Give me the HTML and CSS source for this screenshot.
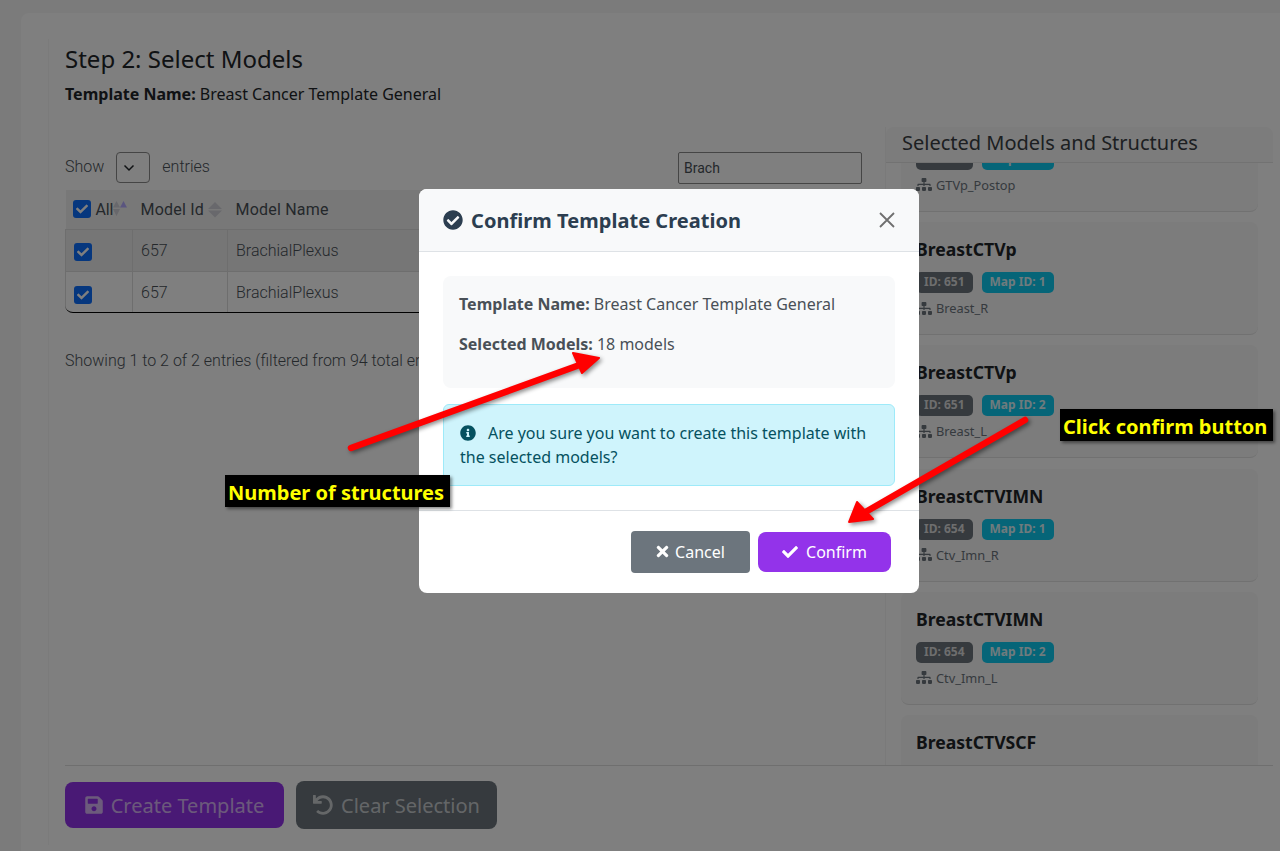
FILE: index.html
```html
<!DOCTYPE html>
<html>
<head>
    <title>Step 2: Select Models</title>
    <link rel="stylesheet" href="styles.css">
</head>
<body>
    <svg class="icon-defs" width="0" height="0">
        <symbol id="i-circle-check" viewBox="0 0 512 512"><path d="M504 256c0 136.967-111.033 248-248 248S8 392.967 8 256 119.033 8 256 8s248 111.033 248 248zM227.314 387.314l184-184c6.248-6.248 6.248-16.379 0-22.627l-22.627-22.627c-6.248-6.249-16.379-6.249-22.628 0L216 308.118l-70.059-70.059c-6.248-6.248-16.379-6.248-22.628 0l-22.627 22.627c-6.248 6.248-6.248 16.379 0 22.627l104 104c6.249 6.249 16.379 6.249 22.628.001z"/></symbol>
        <symbol id="i-circle-info" viewBox="0 0 512 512"><path d="M256 8C119.043 8 8 119.083 8 256c0 136.997 111.043 248 248 248s248-111.003 248-248C504 119.083 392.957 8 256 8zm0 110c23.196 0 42 18.804 42 42s-18.804 42-42 42-42-18.804-42-42 18.804-42 42-42zm56 254c0 6.627-5.373 12-12 12h-88c-6.627 0-12-5.373-12-12v-24c0-6.627 5.373-12 12-12h12v-64h-12c-6.627 0-12-5.373-12-12v-24c0-6.627 5.373-12 12-12h64c6.627 0 12 5.373 12 12v100h12c6.627 0 12 5.373 12 12v24z"/></symbol>
        <symbol id="i-check" viewBox="0 0 512 512"><path d="M173.898 439.404l-166.400-166.400c-9.997-9.997-9.997-26.206 0-36.204l36.203-36.204c9.997-9.998 26.207-9.998 36.204 0L192 312.690 432.095 72.596c9.997-9.997 26.207-9.997 36.204 0l36.203 36.204c9.997 9.997 9.997 26.206 0 36.204l-294.400 294.401c-9.998 9.997-26.207 9.997-36.204-.001z"/></symbol>
        <symbol id="i-xmark" viewBox="0 0 352 512"><path d="M242.720 256l100.070-100.070c12.280-12.280 12.280-32.190 0-44.480l-22.240-22.240c-12.280-12.280-32.190-12.280-44.480 0L176 189.280 75.930 89.210c-12.280-12.280-32.190-12.280-44.480 0L9.210 111.450c-12.280 12.280-12.280 32.190 0 44.480L109.280 256 9.210 356.070c-12.280 12.280-12.280 32.190 0 44.480l22.240 22.240c12.280 12.280 32.200 12.280 44.480 0L176 322.720l100.070 100.070c12.280 12.280 32.200 12.280 44.480 0l22.240-22.240c12.280-12.280 12.280-32.190 0-44.480L242.720 256z"/></symbol>
        <symbol id="i-save" viewBox="0 0 448 512"><path d="M433.941 129.941l-83.882-83.882A48 48 0 0 0 316.118 32H48C21.490 32 0 53.490 0 80v352c0 26.510 21.490 48 48 48h352c26.510 0 48-21.490 48-48V163.882a48 48 0 0 0-14.059-33.941zM224 416c-35.346 0-64-28.654-64-64 0-35.346 28.654-64 64-64s64 28.654 64 64c0 35.346-28.654 64-64 64zm96-304.520V212c0 6.627-5.373 12-12 12H76c-6.627 0-12-5.373-12-12V108c0-6.627 5.373-12 12-12h228.520c3.183 0 6.235 1.264 8.485 3.515l3.480 3.480A11.996 11.996 0 0 1 320 111.480z"/></symbol>
        <symbol id="i-undo" viewBox="0 0 512 512"><path d="M212.333 224.333H12c-6.627 0-12-5.373-12-12V12C0 5.373 5.373 0 12 0h48c6.627 0 12 5.373 12 12v78.112C117.773 39.279 184.260 7.470 258.175 8.007c136.906.994 246.448 111.623 246.157 248.532C504.041 393.258 393.120 504 256.333 504c-64.089 0-122.496-24.313-166.510-64.215-5.099-4.622-5.334-12.554-.467-17.420l33.967-33.967c4.474-4.474 11.662-4.717 16.401-.525C170.760 415.336 211.580 432 256.333 432c97.268 0 176-78.716 176-176 0-97.267-78.716-176-176-176-58.496 0-110.280 28.476-142.274 72.333h98.274c6.627 0 12 5.373 12 12v48c0 6.627-5.373 12-12 12z"/></symbol>
        <symbol id="i-sitemap" viewBox="0 0 640 512"><path d="M128 352H32c-17.670 0-32 14.330-32 32v96c0 17.670 14.330 32 32 32h96c17.670 0 32-14.330 32-32v-96c0-17.670-14.330-32-32-32zm-24-80h192v48h48v-48h192v48h48v-57.590c0-21.170-17.230-38.410-38.410-38.410H344v-64h40c17.670 0 32-14.330 32-32V32c0-17.670-14.330-32-32-32H256c-17.670 0-32 14.330-32 32v96c0 17.670 14.330 32 32 32h40v64H94.410C73.230 224 56 241.230 56 262.410V320h48v-48zm264 80h-96c-17.670 0-32 14.330-32 32v96c0 17.670 14.330 32 32 32h96c17.670 0 32-14.330 32-32v-96c0-17.670-14.330-32-32-32zm240 0h-96c-17.670 0-32 14.330-32 32v96c0 17.670 14.330 32 32 32h96c17.670 0 32-14.330 32-32v-96c0-17.670-14.330-32-32-32z"/></symbol>
    </svg>

    <div class="shell">
        <div class="card">
            <div class="step">
                <div class="step-head">
                    <h2>Step 2: Select Models</h2>
                    <p><strong>Template Name:</strong> Breast Cancer Template General</p>
                </div>

                <div class="columns">
                    <!-- Model table -->
                    <div class="models">
                        <div class="table-top">
                            <div class="length">
                                <span>Show</span>
                                <span class="length-select"><svg width="12" height="8" viewBox="0 0 12 8"><path d="M1.500 1.500 6 6l4.500-4.500" fill="none" stroke="currentColor" stroke-width="1.500"/></svg></span>
                                <span>entries</span>
                            </div>
                            <input class="search" type="text" value="Brach">
                        </div>
                        <div class="table-wrap">
                            <table class="models-table">
                                <thead>
                                    <tr>
                                        <th class="col-check">
                                            <span class="th-all">
                                                <span class="checkbox"><svg><use href="#i-check"/></svg></span>All<svg class="sort sort-all" viewBox="0 0 14 16"><path class="sort-off" d="M0 6.500 3.500 0 7 6.500zM0 8h7l-3.500 7z"/><path class="sort-on" d="M7 6.500 10.500 0 14 6.500z"/></svg>
                                            </span>
                                        </th>
                                        <th class="col-id">Model Id<svg class="sort" viewBox="0 0 14 16"><path class="sort-off" d="M0 7 7 0l7 7zM0 8.500h14L7 15.500z"/></svg></th>
                                        <th>Model Name</th>
                                    </tr>
                                </thead>
                                <tbody>
                                    <tr class="row-odd">
                                        <td><span class="checkbox"><svg><use href="#i-check"/></svg></span></td>
                                        <td>657</td>
                                        <td>BrachialPlexus</td>
                                    </tr>
                                    <tr class="row-last">
                                        <td><span class="checkbox"><svg><use href="#i-check"/></svg></span></td>
                                        <td>657</td>
                                        <td>BrachialPlexus</td>
                                    </tr>
                                </tbody>
                            </table>
                        </div>
                        <div class="table-info">Showing 1 to 2 of 2 entries (filtered from 94 total entries)</div>
                    </div>

                    <!-- Selected models -->
                    <div class="selected">
                        <div class="selected-head">Selected Models and Structures</div>
                        <div class="selected-body">
                            <div class="selected-list">
                                <div class="model-card model-card-clipped">
                                    <div class="badges"><span class="badge badge-id">ID: 640</span><span class="badge badge-map">Map ID: 1</span></div>
                                    <div class="structure"><svg><use href="#i-sitemap"/></svg>GTVp_Postop</div>
                                </div>
                                <div class="model-card">
                                    <h5>BreastCTVp</h5>
                                    <div class="badges"><span class="badge badge-id">ID: 651</span><span class="badge badge-map">Map ID: 1</span></div>
                                    <div class="structure"><svg><use href="#i-sitemap"/></svg>Breast_R</div>
                                </div>
                                <div class="model-card">
                                    <h5>BreastCTVp</h5>
                                    <div class="badges"><span class="badge badge-id">ID: 651</span><span class="badge badge-map">Map ID: 2</span></div>
                                    <div class="structure"><svg><use href="#i-sitemap"/></svg>Breast_L</div>
                                </div>
                                <div class="model-card">
                                    <h5>BreastCTVIMN</h5>
                                    <div class="badges"><span class="badge badge-id">ID: 654</span><span class="badge badge-map">Map ID: 1</span></div>
                                    <div class="structure"><svg><use href="#i-sitemap"/></svg>Ctv_Imn_R</div>
                                </div>
                                <div class="model-card">
                                    <h5>BreastCTVIMN</h5>
                                    <div class="badges"><span class="badge badge-id">ID: 654</span><span class="badge badge-map">Map ID: 2</span></div>
                                    <div class="structure"><svg><use href="#i-sitemap"/></svg>Ctv_Imn_L</div>
                                </div>
                                <div class="model-card">
                                    <h5>BreastCTVSCF</h5>
                                </div>
                            </div>
                        </div>
                    </div>
                </div>

                <div class="step-actions">
                    <button class="btn btn-purple btn-disabled btn-lg"><svg><use href="#i-save"/></svg>Create Template</button>
                    <button class="btn btn-gray btn-disabled btn-lg btn-clear"><svg><use href="#i-undo"/></svg>Clear Selection</button>
                </div>
            </div>
        </div>
    </div>

    <div class="backdrop"></div>

    <div class="modal">
        <div class="modal-head">
            <h5><svg><use href="#i-circle-check"/></svg>Confirm Template Creation</h5>
            <svg class="modal-close" viewBox="0 0 16 16"><path d="M1 1l14 14M15 1 1 15" fill="none" stroke="currentColor" stroke-width="1.800"/></svg>
        </div>
        <div class="modal-body">
            <div class="summary">
                <p><strong>Template Name:</strong> Breast Cancer Template General</p>
                <p><strong>Selected Models:</strong> 18 models</p>
            </div>
            <div class="alert"><svg><use href="#i-circle-info"/></svg>Are you sure you want to create this template with the selected models?</div>
        </div>
        <div class="modal-foot">
            <button class="btn btn-gray btn-cancel"><svg><use href="#i-xmark"/></svg>Cancel</button>
            <button class="btn btn-purple btn-confirm"><svg><use href="#i-check"/></svg>Confirm</button>
        </div>
    </div>

    <!-- Annotations on the screenshot -->
    <svg class="arrows" width="1280" height="851">
        <path d="M351 448 585 363" stroke="#f00" stroke-width="6.500" stroke-linecap="round"/>
        <polygon points="599,358 573,353 582,373" fill="#f00" stroke="#f00" stroke-width="2" stroke-linejoin="round"/>
        <path d="M1025 420 862 514" stroke="#f00" stroke-width="6.500" stroke-linecap="round"/>
        <polygon points="849,522 857,502 873,519" fill="#f00" stroke="#f00" stroke-width="2" stroke-linejoin="round"/>
    </svg>
    <div class="callout callout-structures">Number of structures</div>
    <div class="callout callout-confirm">Click confirm button</div>
</body>
</html>
```

FILE: styles.css
```css
/* Page */
* {
    box-sizing: border-box;
}
body {
    margin: 0;
    height: 851px;
    overflow: hidden;
    position: relative;
    background-color: #f6f6f6;
    color: #212529;
    font-family: "Noto Sans", sans-serif;
    font-size: 16px;
}
svg {
    fill: currentColor;
}
.icon-defs {
    position: absolute;
}
.shell {
    padding: 13px 0 0 21px;
}
.card {
    background-color: #fefefe;
    border-radius: 8px 0 0 0;
    padding: 26px 0 0 27px;
    height: 838px;
}
.step {
    border-left: 1px solid #f6f6f6;
    padding: 5px 7px 0 16px;
}

/* Step header */
.step-head {
    height: 83px;
}
.step-head h2 {
    margin: 0;
    font-size: 24px;
    font-weight: 400;
    line-height: 29px;
}
.step-head p {
    margin: 9px 0 0;
    line-height: 24px;
}
.columns {
    display: flex;
    gap: 23px;
    height: 638px;
}

/* Left side */
.models {
    width: 797px;
    padding-top: 25px;
    font-family: Roboto, sans-serif;
    font-weight: 300;
    color: #495057;
}
.table-top {
    display: flex;
    justify-content: space-between;
    height: 38px;
}
.length {
    display: flex;
    align-items: flex-start;
    gap: 12px;
    line-height: 30px;
}
.length-select {
    display: flex;
    align-items: center;
    justify-content: center;
    width: 34px;
    height: 31px;
    padding-right: 8px;
    border: 1px solid #8a8a8a;
    border-radius: 4px;
    color: #212529;
}
.search {
    width: 184px;
    height: 32px;
    padding: 0 5px;
    border: 1px solid #8a8a8a;
    border-radius: 2px;
    background-color: transparent;
    font-family: Roboto, sans-serif;
    font-size: 14px;
    color: #495057;
}
.table-wrap {
    border-bottom: 1px solid #000;
    border-radius: 0 0 8px 8px;
    overflow: hidden;
}
.models-table {
    width: 100%;
    border-collapse: collapse;
    table-layout: fixed;
}
.models-table th {
    height: 39px;
    padding: 0 9px 0 8px;
    background-color: #f1f1f1;
    font-weight: 400;
    text-align: left;
    white-space: nowrap;
    letter-spacing: 0.2px;
}
.col-check {
    width: 67px;
}
.col-id {
    width: 95px;
}
.th-all {
    display: flex;
    align-items: center;
    height: 37px;
    margin-left: -1px;
    letter-spacing: -0.2px;
}
.th-all .checkbox {
    margin-right: 5px;
}
.sort {
    width: 14px;
    height: 16px;
    margin-left: 4px;
    vertical-align: -3px;
}
.sort-all {
    margin-left: 0;
    margin-right: -20px;
    flex-shrink: 0;
}
.sort-off {
    fill: #d0d0d8;
}
.sort-on {
    fill: #b4aaff;
}
.models-table td {
    height: 42px;
    padding: 0 8px;
    border-top: 1px solid #dcdcdc;
    border-left: 1px solid #dcdcdc;
}
.models-table .row-last td {
    height: 41px;
    padding-top: 2px;
}
.row-odd td {
    background-color: #ececec;
}
.checkbox {
    display: inline-flex;
    align-items: center;
    justify-content: center;
    width: 18px;
    height: 18px;
    background-color: #0d6efd;
    border-radius: 3px;
    color: #fff;
    vertical-align: -4px;
}
.checkbox svg {
    width: 12px;
    height: 12px;
}
.table-info {
    margin-top: 37px;
    line-height: 22px;
}

/* Right side */
.selected {
    width: 388px;
    display: flex;
    flex-direction: column;
    border-left: 1px solid #f4f4f4;
}
.selected-head {
    height: 36px;
    padding-left: 16px;
    background-color: #f8f8f8;
    border-bottom: 1px solid #e4e4e4;
    border-radius: 8px 8px 0 0;
    font-size: 20px;
    line-height: 31px;
    color: #3a3f44;
}
.selected-body {
    flex: 1;
    overflow: hidden;
    padding: 0 15px 0 15px;
}
.selected-list {
    margin-top: -64.25px;
}
.model-card {
    height: 113px;
    margin-bottom: 10.25px;
    padding: 15px 15px 0;
    background-color: #f8f8f8;
    border-bottom: 1px solid #e2e2e2;
    border-radius: 8px;
}
.model-card-clipped {
    padding-top: 50px;
}
.model-card h5 {
    margin: 0;
    font-size: 17.6px;
    font-weight: 700;
    line-height: 24px;
}
.badges {
    display: flex;
    gap: 9px;
    margin-top: 11px;
}
.model-card-clipped .badges {
    margin-top: 0;
}
.badge {
    height: 21px;
    padding: 0 8px;
    border-radius: 5px;
    font-size: 12px;
    font-weight: 700;
    line-height: 20px;
    color: #fff;
}
.badge-id {
    background-color: #6c757d;
    color: #dcdcdc;
}
.badge-map {
    background-color: #0dcaf0;
    color: #dff6fb;
}
.structure {
    display: flex;
    align-items: center;
    gap: 4px;
    margin-top: 5px;
    font-size: 12.8px;
    line-height: 20px;
    color: #6c757d;
}
.structure svg {
    width: 16px;
    height: 13px;
}

/* Buttons */
.step-actions {
    display: flex;
    align-items: center;
    gap: 12px;
    height: 80px;
    padding-bottom: 2px;
    border-top: 1px solid #dedede;
}
.btn {
    display: inline-flex;
    align-items: center;
    justify-content: center;
    border: none;
    border-radius: 6px;
    font-family: "Noto Sans", sans-serif;
    font-size: 16px;
    color: #fff;
}
.btn svg {
    width: 16px;
    height: 16px;
    margin-right: 6px;
}
.btn-purple {
    background-color: #9333ea;
}
.btn-gray {
    background-color: #6c757d;
}
.btn-lg {
    height: 46px;
    padding-top: 2px;
    border-radius: 8px;
    font-size: 20px;
    width: 219px;
}
.btn-lg svg {
    width: 18px;
    height: 20px;
    margin-right: 8px;
}
.btn-lg.btn-clear {
    height: 48px;
    width: 201px;
}
.btn-clear svg {
    width: 20px;
    height: 20px;
}
.btn-disabled {
    color: rgba(255, 255, 255, 0.65);
}
.btn-cancel {
    width: 119px;
    height: 42px;
    border-radius: 4px;
}
.btn-cancel svg {
    width: 13px;
    height: 17px;
}
.btn-confirm {
    width: 133px;
    height: 40px;
    border-radius: 8px;
}
.btn-confirm svg {
    margin-right: 8px;
}

/* Modal */
.backdrop {
    position: absolute;
    inset: 0;
    background-color: rgba(0, 0, 0, 0.5);
}
.modal {
    position: absolute;
    left: 419px;
    top: 189px;
    width: 500px;
    height: 404px;
    background-color: #fff;
    border-radius: 8px;
    overflow: hidden;
}
.modal-head {
    display: flex;
    align-items: center;
    justify-content: space-between;
    height: 63px;
    padding: 0 24px;
    background-color: #f8f9fa;
    border-bottom: 1px solid #dee2e6;
}
.modal-head h5 {
    display: flex;
    align-items: center;
    gap: 8px;
    margin: 0;
    font-size: 20px;
    font-weight: 700;
    letter-spacing: 0.04px;
    color: #2c3e50;
}
.modal-head h5 svg {
    width: 20px;
    height: 20px;
}
.modal-close {
    width: 16px;
    height: 16px;
    color: #6f6f6f;
}
.modal-body {
    height: 259px;
    padding: 24px 24px 0;
    border-bottom: 1px solid #dee2e6;
}
.summary {
    height: 112px;
    padding: 16px;
    background-color: #f8f9fa;
    border-radius: 8px;
    color: #495057;
}
.summary p {
    margin: 0 0 16px;
    line-height: 24px;
}
.alert {
    height: 82px;
    margin-top: 16px;
    padding: 16px;
    background-color: #cff4fc;
    border: 1px solid #9eeaf9;
    border-radius: 6px;
    color: #055160;
    line-height: 24px;
}
.alert svg {
    width: 16px;
    height: 16px;
    margin-right: 12px;
    vertical-align: -2px;
}
.modal-foot {
    display: flex;
    align-items: center;
    justify-content: flex-end;
    gap: 8px;
    height: 81px;
    padding: 0 28px 0 0;
}

/* Annotations */
.arrows {
    position: absolute;
    left: 0;
    top: 0;
    filter: drop-shadow(2px 2px 2px rgba(0, 0, 0, 0.45));
}
.callout {
    position: absolute;
    height: 32px;
    padding: 0 3px;
    background-color: #000;
    box-shadow: 2px 2px 3px rgba(0, 0, 0, 0.45);
    color: #ff0;
    font-size: 20px;
    font-weight: 700;
    line-height: 36px;
    white-space: nowrap;
}
.callout-structures {
    left: 225px;
    top: 475px;
    width: 225px;
}
.callout-confirm {
    left: 1060px;
    top: 409px;
    width: 213px;
}
```
